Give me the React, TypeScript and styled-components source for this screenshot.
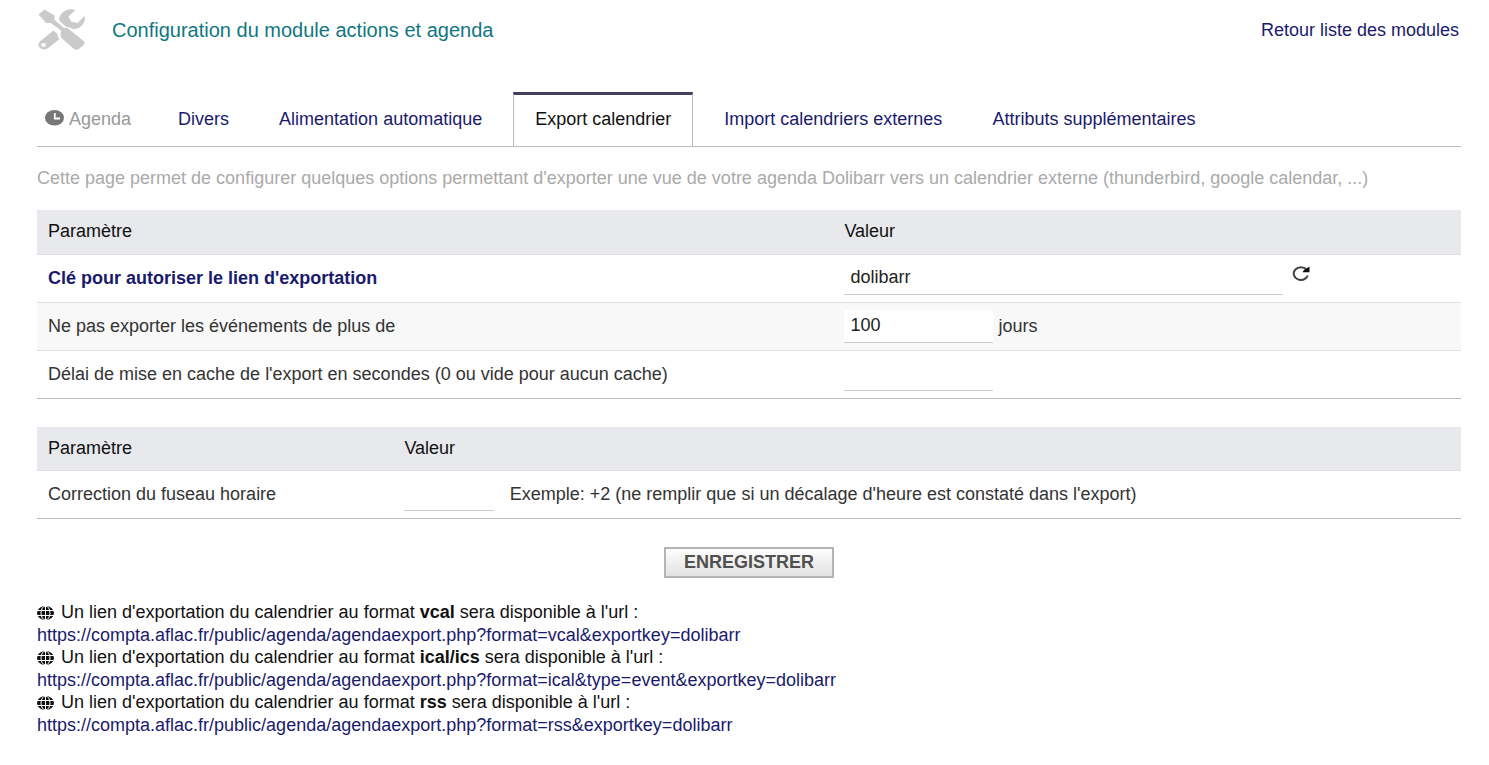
import React from 'react';
import styled, { createGlobalStyle } from 'styled-components';

const GlobalStyle = createGlobalStyle`
  body {
    margin: 0;
    background: #fff;
    color: #222;
    font-family: "Liberation Sans", Arial, Helvetica, sans-serif;
    font-size: 18px;
    line-height: 23px;
  }
  * { box-sizing: border-box; }
`;

const Page = styled.main`
  padding: 0 28px 28px 37px;
`;

const Header = styled.header`
  display: flex;
  align-items: center;
  height: 60px;
  gap: 26px;
  padding-right: 2px;
`;

const Title = styled.h1`
  margin: 0;
  flex: 1;
  font-size: 20px;
  font-weight: 400;
  color: #11777f;
`;

const Link = styled.a`
  color: #1a1a6c;
  text-decoration: none;
`;

const Tabs = styled.nav`
  display: flex;
  align-items: flex-end;
  margin-top: 32px;
  border-bottom: 1px solid #bbb;
`;

const TabTitle = styled.span`
  display: flex;
  align-items: center;
  gap: 5px;
  height: 54px;
  padding: 0 22px 0 8px;
  color: #999;
`;

const Tab = styled.a<{ $active?: boolean }>`
  height: 54px;
  padding: ${(p) => (p.$active ? '13px 21px 0' : '16px 25px 0')};
  border: solid #bbb;
  border-width: ${(p) => (p.$active ? '3px 1px 0' : '0')};
  border-top-color: #41415f;
  margin: 0 ${(p) => (p.$active ? 6 : 0)}px;
  color: ${(p) => (p.$active ? '#111' : '#1a1a6c')};
  text-decoration: none;
  white-space: nowrap;
`;

const Intro = styled.p`
  margin: 20px 0;
  color: #aaa;
`;

const Table = styled.table`
  width: 100%;
  margin-bottom: 28px;
  border-collapse: collapse;
  table-layout: fixed;
  border-bottom: 1px solid #bbb;
`;

const HeadCell = styled.th<{ $width?: string }>`
  width: ${(p) => p.$width ?? 'auto'};
  height: 44px;
  padding: 0;
  background: #e8e9ed;
  text-align: left;
  font-weight: 400;
  color: #111;
  &:first-child { padding-left: 11px; }
`;

const Row = styled.tr<{ $shaded?: boolean }>`
  background: ${(p) => (p.$shaded ? '#f8f8f8' : '#fff')};
`;

const Cell = styled.td<{ $strong?: boolean }>`
  height: 48px;
  padding: 0;
  border-top: 1px solid #e0e0e0;
  font-weight: ${(p) => (p.$strong ? 700 : 400)};
  color: ${(p) => (p.$strong ? '#1a1a6c' : '#333')};
  &:first-child { padding-left: 11px; }
`;

const Field = styled.div`
  display: flex;
  align-items: center;
  gap: 5px;
`;

const TextInput = styled.input<{ $width: number }>`
  width: ${(p) => p.$width}px;
  height: 33px;
  padding: 0 6px;
  border: 0;
  border-bottom: 1px solid #ccc;
  background: #fff;
  color: #222;
  font: inherit;
`;

const IconButton = styled.button`
  display: flex;
  padding: 0 4px 10px;
  border: 0;
  background: none;
`;

const Actions = styled.div`
  display: flex;
  justify-content: center;
  margin-bottom: 23px;
`;

const SaveButton = styled.button`
  height: 31px;
  padding: 0 18px;
  border: 2px solid #b4b4b4;
  background: linear-gradient(#fdfdfd, #e2e2e2);
  color: #505050;
  font: inherit;
  font-weight: 700;
`;

const ExportItem = styled.div`
  color: #111;
`;

const ExportLabel = styled.div`
  display: flex;
  align-items: center;
  gap: 7px;
  line-height: 23px;
`;

const ExportLink = styled(Link)`
  display: block;
  line-height: 22px;
`;

const ToolsIcon = () => (
  <svg width="49" height="42" viewBox="0 0 49 42" fill="#cacaca" aria-hidden="true">
    <path d="M1.5 5.5L7.5 0.5L17.5 6.5V11L27 19Q30 18 33 21L46 31.5Q49 34 46 36.5L42.5 39.5Q39.5 42 36.5 39.5L25 29.5Q22 27 24.5 22L14 14H9Z" />
    <path d="M38.5 1Q31 -1 26 3Q21.5 7 22.5 12L29.5 18Q31 17.5 36 20Q43 20 46 15Q49 11 47.5 7L40.5 14L34 12.5L31.5 7.5Z" />
    <path fillRule="evenodd" d="M16.5 21.5L20.5 25Q20.5 28 22.5 30L12 38.5Q7.5 42 3 39Q-0.5 35.5 3.5 32ZM6.5 33.9a2.5 2.1 0 1 0 0 4.2a2.5 2.1 0 1 0 0 -4.2Z" />
  </svg>
);

const ClockIcon = () => (
  <svg width="19" height="18" viewBox="0 0 19 18" aria-hidden="true">
    <ellipse cx="9.5" cy="7.8" rx="9.5" ry="7.8" fill="#777" />
    <path d="M9.8 3V8.5H15" fill="none" stroke="#fff" strokeWidth="1.8" />
  </svg>
);

const RefreshIcon = () => (
  <svg width="18" height="16" viewBox="0 0 18 16" aria-hidden="true">
    <path d="M14.5 4.5A7.2 6.4 0 1 0 15.8 10.5" fill="none" stroke="#444" strokeWidth="2" />
    <path d="M17.5 1.5V7.2H10.5L12 5Z" fill="#111" />
  </svg>
);

const GlobeIcon = () => (
  <svg width="17" height="14" viewBox="0 0 17 14" aria-hidden="true">
    <ellipse cx="8.5" cy="7" rx="8.5" ry="7" fill="#111" />
    <g fill="none" stroke="#fff" strokeWidth="1">
      <path d="M8.5 0V14M0 4.5H17M0 9.5H17" />
      <ellipse cx="8.5" cy="7" rx="4.5" ry="7" />
    </g>
  </svg>
);

const base = 'https://compta.aflac.fr/public/agenda/agendaexport.php';
const exportsList = [
  { format: 'vcal', url: `${base}?format=vcal&exportkey=dolibarr` },
  { format: 'ical/ics', url: `${base}?format=ical&type=event&exportkey=dolibarr` },
  { format: 'rss', url: `${base}?format=rss&exportkey=dolibarr` },
];

export default function App() {
  return (
    <Page>
      <GlobalStyle />
      <Header>
        <ToolsIcon />
        <Title>Configuration du module actions et agenda</Title>
        <Link href="#modules">Retour liste des modules</Link>
      </Header>
      <Tabs>
        <TabTitle><ClockIcon />Agenda</TabTitle>
        <Tab href="#divers">Divers</Tab>
        <Tab href="#auto">Alimentation automatique</Tab>
        <Tab href="#export" $active aria-current="page">Export calendrier</Tab>
        <Tab href="#import">Import calendriers externes</Tab>
        <Tab href="#attributs">Attributs supplémentaires</Tab>
      </Tabs>
      <Intro>
        Cette page permet de configurer quelques options permettant d'exporter une vue de votre agenda Dolibarr vers un calendrier externe (thunderbird, google calendar, ...)
      </Intro>
      <form onSubmit={(e) => e.preventDefault()}>
        <Table>
          <thead>
            <tr>
              <HeadCell $width="56.7%">Paramètre</HeadCell>
              <HeadCell>Valeur</HeadCell>
            </tr>
          </thead>
          <tbody>
            <Row>
              <Cell $strong><label htmlFor="key">Clé pour autoriser le lien d'exportation</label></Cell>
              <Cell>
                <Field>
                  <TextInput id="key" $width={439} defaultValue="dolibarr" />
                  <IconButton type="button" aria-label="Générer"><RefreshIcon /></IconButton>
                </Field>
              </Cell>
            </Row>
            <Row $shaded>
              <Cell><label htmlFor="past">Ne pas exporter les événements de plus de</label></Cell>
              <Cell>
                <Field><TextInput id="past" $width={149} defaultValue="100" />jours</Field>
              </Cell>
            </Row>
            <Row>
              <Cell><label htmlFor="cache">Délai de mise en cache de l'export en secondes (0 ou vide pour aucun cache)</label></Cell>
              <Cell><Field><TextInput id="cache" $width={149} /></Field></Cell>
            </Row>
          </tbody>
        </Table>
        <Table>
          <thead>
            <tr>
              <HeadCell $width="25.8%">Paramètre</HeadCell>
              <HeadCell $width="7.4%">Valeur</HeadCell>
              <HeadCell />
            </tr>
          </thead>
          <tbody>
            <Row>
              <Cell><label htmlFor="timezone">Correction du fuseau horaire</label></Cell>
              <Cell><Field><TextInput id="timezone" $width={90} /></Field></Cell>
              <Cell>Exemple: +2 (ne remplir que si un décalage d'heure est constaté dans l'export)</Cell>
            </Row>
          </tbody>
        </Table>
        <Actions><SaveButton type="submit">ENREGISTRER</SaveButton></Actions>
      </form>
      {exportsList.map(({ format, url }) => (
        <ExportItem key={format}>
          <ExportLabel>
            <GlobeIcon />
            <span>Un lien d'exportation du calendrier au format <b>{format}</b> sera disponible à l'url :</span>
          </ExportLabel>
          <ExportLink href={url}>{url}</ExportLink>
        </ExportItem>
      ))}
    </Page>
  );
}
